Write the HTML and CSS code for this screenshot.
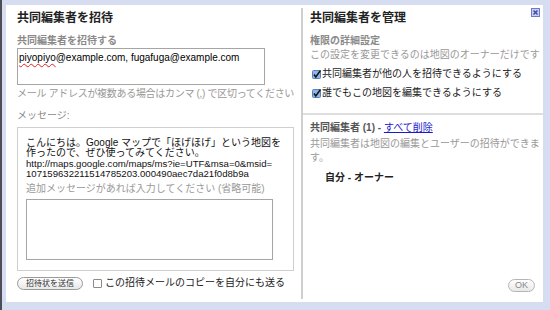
FILE: index.html
```html
<!DOCTYPE html>
<html lang="ja">
<head>
    <meta charset="UTF-8">
    <title>共同編集者</title>
    <link rel="stylesheet" href="styles.css">
</head>
<body>
    <div class="page">
        <div class="dialog">
            <section class="invite">
                <h2>共同編集者を招待</h2>
                <div class="label">共同編集者を招待する</div>
                <div class="emails"><span class="misspelled">piyopiyo</span>@example.com, fugafuga@example.com</div>
                <div class="hint tight">メール アドレスが複数ある場合はカンマ (,) で区切ってください</div>
                <div class="label-plain">メッセージ:</div>
                <div class="message-box">
                    <p class="message">こんにちは。Google マップで「ほげほげ」という地図を<br>作ったので、ぜひ使ってみてください。<br><span class="url">http://maps.google.com/maps/ms?ie=UTF&amp;msa=0&amp;msid=<br>107159632211514785203.000490aec7da21f0d8b9a</span></p>
                    <div class="hint">追加メッセージがあれば入力してください (省略可能)</div>
                    <div class="extra"></div>
                </div>
                <div class="actions">
                    <span class="pill send">招待状を送信</span>
                    <span class="box"></span>
                    <span class="copy">この招待メールのコピーを自分にも送る</span>
                </div>
            </section>
            <section class="manage">
                <div class="manage-top">
                    <h2>共同編集者を管理</h2>
                    <div class="label">権限の詳細設定</div>
                    <div class="hint">この設定を変更できるのは地図のオーナーだけです</div>
                    <div class="option">
                        <svg class="tick" width="9" height="9" viewBox="0 0 9 9"><rect x="0.5" y="0.5" width="8" height="8" rx="1" fill="#8fb4e8" stroke="#5b7fb8"/><path d="M2 4.5 L3.8 7 L8.5 0.5" fill="none" stroke="#111" stroke-width="1.5"/></svg>
                        共同編集者が他の人を招待できるようにする
                    </div>
                    <div class="option">
                        <svg class="tick" width="9" height="9" viewBox="0 0 9 9"><rect x="0.5" y="0.5" width="8" height="8" rx="1" fill="#8fb4e8" stroke="#5b7fb8"/><path d="M2 4.5 L3.8 7 L8.5 0.5" fill="none" stroke="#111" stroke-width="1.5"/></svg>
                        誰でもこの地図を編集できるようにする
                    </div>
                </div>
                <div class="manage-list">
                    <div class="count">共同編集者 (1) - <a href="#">すべて削除</a></div>
                    <div class="hint">共同編集者は地図の編集とユーザーの招待ができます。</div>
                    <div class="owner">自分 - オーナー</div>
                </div>
                <div class="footer">
                    <span class="pill ok">OK</span>
                </div>
            </section>
            <svg class="close" width="9" height="9" viewBox="0 0 9 9"><rect x="0.5" y="0.5" width="8" height="8" fill="#c9cdf2" stroke="#7078cc"/><path d="M2.5 2.5 L6.5 6.5 M6.5 2.5 L2.5 6.5" stroke="#3b44a8" stroke-width="1.4"/></svg>
        </div>
    </div>
</body>
</html>
```

FILE: styles.css
```css
body {
    margin: 0;
    background-color: #d6ddf1;
    font-family: "Liberation Sans", "Noto Sans CJK JP", sans-serif;
    color: #222;
}

.page {
    width: 548px;
    height: 310px;
    border-left: 2px solid #4d4d57;
    padding: 5px 0 0 4px;
    box-sizing: border-box;
}

.dialog {
    position: relative;
    width: 537px;
    height: 297px;
    background: white;
    display: flex;
}

h2 {
    margin: 0;
    font-size: 12px;
    line-height: 16px;
    font-weight: bold;
    color: #222;
}

.invite {
    width: 284px;
    flex-shrink: 0;
    padding: 5px 0 0 11px;
}

.label {
    margin-top: 8px;
    font-size: 10px;
    line-height: 14px;
    font-weight: bold;
    color: #8a8a8a;
}

.label-plain {
    margin-top: 8px;
    font-size: 10px;
    line-height: 14px;
    color: #8a8a8a;
}

.hint {
    font-size: 10px;
    line-height: 14px;
    color: #999;
    white-space: nowrap;
}

.tight {
    letter-spacing: -0.3px;
}

.emails {
    width: 244px;
    height: 31px;
    border: 1px solid #a5a5a5;
    padding: 2px 1px;
    font-size: 10px;
    line-height: 13px;
    color: #000;
}

.misspelled {
    text-decoration: underline wavy #e02020 1px;
    text-underline-offset: 2px;
}

.invite > .hint {
    margin-top: 2px;
}

.message-box {
    margin-top: 4px;
    width: 259px;
    height: 132px;
    border: 1px solid #cfcfcf;
    padding: 10px 8px 0 8px;
}

.message {
    margin: 0;
    font-size: 10px;
    line-height: 10.3px;
    color: #111;
    white-space: nowrap;
}

.url {
    font-size: 9.6px;
}

.message-box .hint {
    margin-top: 3px;
}

.extra {
    margin-top: 3px;
    width: 245px;
    height: 59px;
    border: 1px solid #a5a5a5;
}

.actions {
    margin-top: 5px;
    display: flex;
    align-items: center;
}

.pill {
    display: inline-block;
    height: 11px;
    padding: 0 6px;
    border: 1px solid #9a9a9a;
    border-radius: 7px;
    background: linear-gradient(#ffffff, #e8e8e8);
    font-size: 8px;
    line-height: 11px;
    color: #333;
}

.send {
    padding: 0 8px;
}

.box {
    margin-left: 10px;
    width: 7px;
    height: 7px;
    border: 1px solid #8a8a8a;
    border-radius: 1px;
}

.copy {
    margin-left: 3px;
    font-size: 10px;
    line-height: 14px;
    color: #222;
}

.manage {
    flex: 1;
    min-width: 0;
    display: flex;
    flex-direction: column;
    border-left: 2px solid #cfcfcf;
    margin: 3px 0 3px 0;
}

.manage-top {
    height: 103px;
    padding: 2px 0 0 7px;
    border-bottom: 2px solid #dedede;
}

.option {
    margin-top: 5px;
    display: flex;
    align-items: center;
    gap: 1px;
    font-size: 10px;
    line-height: 14px;
    color: #222;
}

.tick {
    margin-left: 2px;
}

.manage-list {
    flex: 1;
    padding: 6px 0 0 7px;
}

.count {
    font-size: 10px;
    line-height: 14px;
    font-weight: bold;
    color: #555;
}

.count a {
    color: #1a1acc;
    font-weight: normal;
}

.manage-list .hint {
    margin-top: 2px;
    white-space: normal;
    width: 230.5px;
}

.owner {
    margin: 6px 0 0 15px;
    font-size: 10px;
    line-height: 14px;
    font-weight: bold;
    color: #222;
}

.footer {
    display: flex;
    justify-content: flex-end;
    padding: 0 8px 7px 0;
}

.ok {
    height: 11px;
    padding: 0 6px;
    font-size: 9px;
    line-height: 11px;
    color: #888;
    border-color: #b5b5b5;
    border-radius: 7px;
}

.close {
    position: absolute;
    top: 3px;
    right: 3px;
}
```
